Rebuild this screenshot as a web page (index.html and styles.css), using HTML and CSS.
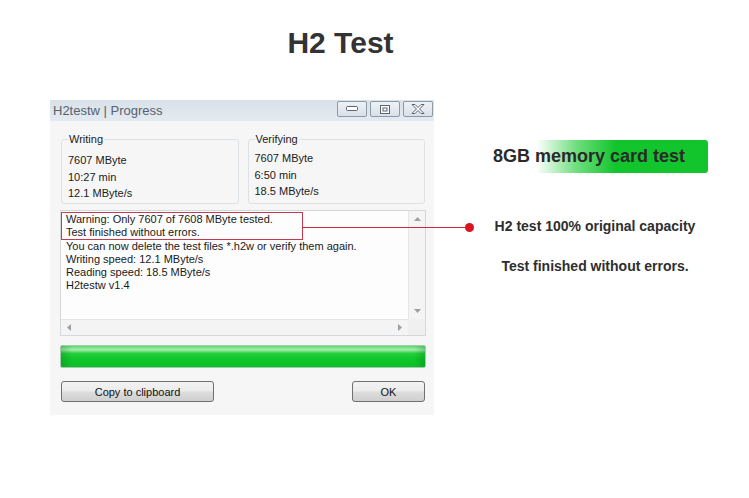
FILE: index.html
```html
<!DOCTYPE html>
<html>
<head>
<meta charset="utf-8">
<link rel="stylesheet" href="styles.css">
</head>
<body>
<div class="page">
  <h1 class="title">H2 Test</h1>
  <div class="stage">
    <div class="window">
      <div class="titlebar">
        <span class="wtitle">H2testw | Progress</span>
        <div class="wbtns">
          <span class="wbtn"><svg width="12" height="6" viewBox="0 0 12 6"><rect x="0.5" y="0.5" width="11" height="4" rx="1" fill="#fff" stroke="#5a6570"/></svg></span>
          <span class="wbtn"><svg width="10" height="9" viewBox="0 0 10 9"><rect x="0.5" y="0.5" width="9" height="8" fill="#fff" stroke="#5a6570"/><rect x="3" y="3" width="4" height="3" fill="none" stroke="#5a6570"/></svg></span>
          <span class="wbtn"><svg width="14" height="10" viewBox="0 0 14 10"><path d="M1 0.5 H4 L7 3.5 L10 0.5 H13 L8.5 5 L13 9.5 H10 L7 6.5 L4 9.5 H1 L5.5 5 Z" fill="#fff" stroke="#5a6570" stroke-width="1"/></svg></span>
        </div>
      </div>
      <div class="wbody">
        <div class="groups">
          <fieldset class="group">
            <legend>Writing</legend>
            <div class="gline">7607 MByte</div>
            <div class="gline">10:27 min</div>
            <div class="gline">12.1 MByte/s</div>
          </fieldset>
          <fieldset class="group group-verify">
            <legend>Verifying</legend>
            <div class="gline">7607 MByte</div>
            <div class="gline">6:50 min</div>
            <div class="gline">18.5 MByte/s</div>
          </fieldset>
        </div>
        <div class="log">
          <div class="log-text">
            <div class="warn">
              <div>Warning: Only 7607 of 7608 MByte tested.</div>
              <div>Test finished without errors.</div>
            </div>
            <div class="lline">You can now delete the test files *.h2w or verify them again.</div>
            <div class="lline">Writing speed: 12.1 MByte/s</div>
            <div class="lline">Reading speed: 18.5 MByte/s</div>
            <div class="lline">H2testw v1.4</div>
          </div>
          <div class="vscroll">
            <svg width="7" height="4" viewBox="0 0 7 4"><path d="M0 4 L3.5 0 L7 4 Z" fill="#9aa0a6"/></svg>
            <svg width="7" height="4" viewBox="0 0 7 4"><path d="M0 0 L3.5 4 L7 0 Z" fill="#9aa0a6"/></svg>
          </div>
          <div class="hscroll">
            <svg width="4" height="7" viewBox="0 0 4 7"><path d="M4 0 L0 3.5 L4 7 Z" fill="#9aa0a6"/></svg>
            <svg width="4" height="7" viewBox="0 0 4 7"><path d="M0 0 L4 3.5 L0 7 Z" fill="#9aa0a6"/></svg>
          </div>
          <div class="corner"></div>
        </div>
        <div class="progress"></div>
        <div class="actions">
          <button class="btn btn-copy">Copy to clipboard</button>
          <button class="btn btn-ok">OK</button>
        </div>
      </div>
    </div>
    <div class="side">
      <div class="badge">8GB memory card test</div>
      <p class="note note-1">H2 test 100% original capacity</p>
      <p class="note note-2">Test finished without errors.</p>
    </div>
    <div class="connector"><span class="dot"></span></div>
  </div>
</div>
</body>
</html>
```

FILE: styles.css
```css
* { box-sizing: border-box; }
html, body { margin: 0; padding: 0; background: #fff; }
body { font-family: "Liberation Sans", Arial, sans-serif; color: #333; }

.page { width: 749px; height: 498px; overflow: hidden; }

.title {
  margin: 0;
  padding: 26px 68px 0 0;
  text-align: center;
  font-size: 30px;
  line-height: 34px;
  font-weight: bold;
  color: #333;
}

.stage {
  position: relative;
  display: flex;
  margin-top: 40px;
  padding-left: 50px;
}

.window {
  width: 384px;
  height: 315px;
  background: #f6f6f6;
  display: flex;
  flex-direction: column;
}

.titlebar {
  height: 21px;
  display: flex;
  align-items: flex-start;
  justify-content: space-between;
  background: linear-gradient(#d8e1ea, #e4eaf0);
}
.wtitle {
  padding-left: 3px;
  font-size: 13px;
  line-height: 21px;
  color: #56626d;
}
.wbtns { display: flex; gap: 3px; margin: 1px 1px 0 0; }
.wbtn {
  width: 30px;
  height: 16px;
  border: 1px solid #8e9aa6;
  border-radius: 2px;
  background: linear-gradient(#eef2f6, #d8e0e8);
  display: flex;
  align-items: center;
  justify-content: center;
}

.wbody {
  flex: 1;
  padding: 12px 8px 0 10px;
  display: flex;
  flex-direction: column;
  font-size: 11px;
  color: #1a1a1a;
}

.groups {
  display: grid;
  grid-template-columns: 1fr 1fr;
  gap: 9px;
  padding: 0 1px;
}
.group {
  margin: 0;
  min-width: 0;
  padding: 6px 6px 0 6px;
  border: 1px solid #dde2e6;
  border-radius: 3px;
  height: 71px;
}
.group legend {
  padding: 0 1px;
  margin-left: 0;
  line-height: 13px;
  font-size: 11px;
}
.gline { line-height: 16.5px; }
.group-verify .gline { position: relative; top: -2px; }

.log {
  margin-top: 6px;
  height: 126px;
  border: 1px solid #d3d8dd;
  background: #fdfdfd;
  display: grid;
  grid-template-columns: 1fr 17px;
  grid-template-rows: 1fr 16px;
}
.log-text {
  padding-top: 1px;
  line-height: 13px;
  font-size: 11px;
  color: #1a1a1a;
  white-space: nowrap;
  overflow: hidden;
}
.warn {
  width: 242px;
  border: 1px solid #c33b50;
  padding-left: 4px;
}
.lline { padding-left: 5px; }

.vscroll {
  background: #f4f4f4;
  border-left: 1px solid #e6e6e6;
  display: flex;
  flex-direction: column;
  justify-content: space-between;
  align-items: center;
  padding: 6px 0 6px;
}
.hscroll {
  background: #f4f4f4;
  border-top: 1px solid #e6e6e6;
  display: flex;
  justify-content: space-between;
  align-items: center;
  padding: 0 6px;
}
.corner { background: #f0f0f0; }

.progress {
  margin-top: 9px;
  height: 23px;
  border: 1px solid #a7c9ad;
  border-radius: 2px;
  background:
    linear-gradient(to right, rgba(0,100,20,0.25), rgba(0,0,0,0) 3%, rgba(0,0,0,0) 97%, rgba(0,100,20,0.25)),
    linear-gradient(#5bd96c 0%, #a6eeae 18%, #27cf3e 35%, #0fc62b 60%, #0bc027 100%);
}

.actions {
  margin-top: 13px;
  display: flex;
  justify-content: space-between;
  padding: 0 1px;
}
.btn {
  height: 21px;
  padding: 0;
  border: 1px solid #707070;
  border-radius: 3px;
  background: linear-gradient(#f3f3f3 0%, #ebebeb 48%, #dddddd 52%, #cfcfcf 100%);
  font-family: "Liberation Sans", Arial, sans-serif;
  font-size: 11px;
  color: #111;
}
.btn-copy { width: 153px; }
.btn-ok { width: 73px; }

.side {
  margin-left: 41px;
  width: 240px;
  text-align: center;
}
.badge {
  margin: 40px 0 0 13px;
  width: 220px;
  height: 33px;
  line-height: 33px;
  padding-left: 5px;
  text-align: left;
  font-size: 18px;
  font-weight: bold;
  color: #2a2a2a;
  border-radius: 0 3px 3px 0;
  background: linear-gradient(to right, rgba(17,200,42,0) 22%, rgba(17,200,42,0.6) 40%, #12c52c 58%, #12c52c 100%);
}
.note {
  margin: 0;
  font-size: 14px;
  line-height: 16px;
  font-weight: bold;
  color: #2e2e2e;
}
.note-1 { margin-top: 45px; }
.note-2 { margin-top: 24px; }

.connector {
  position: absolute;
  left: 303px;
  top: 127px;
  width: 167px;
  height: 1px;
  background: #c8283c;
}
.dot {
  position: absolute;
  right: -4px;
  top: -4px;
  width: 9px;
  height: 9px;
  border-radius: 50%;
  background: #d9141f;
}
```
